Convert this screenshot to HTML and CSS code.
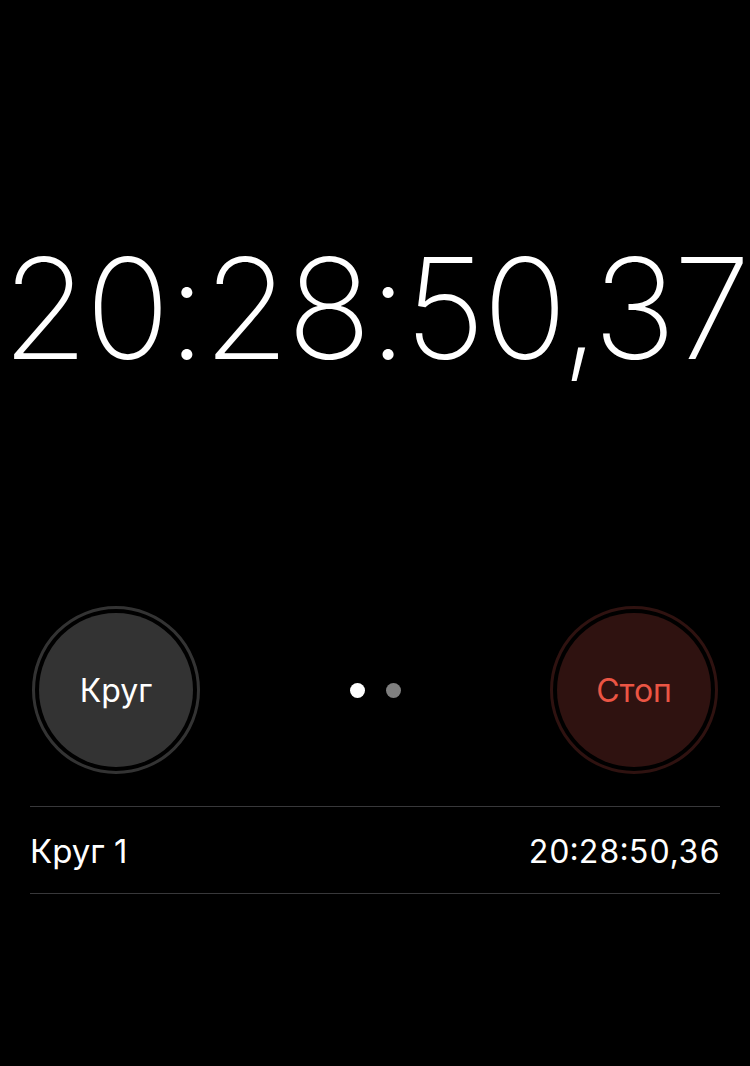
FILE: index.html
```html
<!DOCTYPE html>
<html lang="ru">
<head>
<meta charset="utf-8">
<link rel="stylesheet" href="styles.css">
</head>
<body>
<main class="stopwatch">
  <div class="clock">20:28:50,37</div>
  <div class="controls">
    <button class="btn btn-lap"><span class="btn-face">Круг</span></button>
    <div class="pager">
      <span class="dot dot-active"></span>
      <span class="dot"></span>
    </div>
    <button class="btn btn-stop"><span class="btn-face">Стоп</span></button>
  </div>
  <ul class="laps">
    <li class="lap"><span class="lap-name">Круг 1</span><span class="lap-time">20:28:50,36</span></li>
  </ul>
</main>
</body>
</html>
```
FILE: styles.css
```css
html, body {
  margin: 0;
  background: #000;
  color: #fff;
  font-family: Inter, "Noto Sans", "Liberation Sans", sans-serif;
}

.stopwatch {
  width: 750px;
  height: 1066px;
  display: flex;
  flex-direction: column;
}

.clock {
  margin-top: 228px;
  height: 160px;
  display: flex;
  align-items: center;
  justify-content: center;
  font-size: 140px;
  font-weight: 200;
  letter-spacing: -2.8px;
  white-space: nowrap;
}

.controls {
  margin-top: 218px;
  padding: 0 32px;
  height: 168px;
  display: flex;
  align-items: center;
  justify-content: space-between;
}

.btn {
  width: 168px;
  height: 168px;
  border-radius: 50%;
  padding: 0;
  border: 3px solid;
  background: #000;
  display: flex;
  align-items: center;
  justify-content: center;
  font-family: inherit;
  box-sizing: border-box;
}

.btn-face {
  width: 154px;
  height: 154px;
  border-radius: 50%;
  display: flex;
  align-items: center;
  justify-content: center;
  font-size: 32px;
}

.btn-lap { border-color: #333; }
.btn-lap .btn-face { background: #333; color: #fff; }

.btn-stop { border-color: #2f1210; }
.btn-stop .btn-face { background: #2f1210; color: #eb5544; }

.pager {
  display: flex;
  gap: 21px;
}

.dot {
  width: 15px;
  height: 15px;
  border-radius: 50%;
  background: #7f7f7f;
}

.dot-active { background: #fff; }

.laps {
  list-style: none;
  margin: 32px 30px 0;
  padding: 0;
  border-top: 1px solid #38383a;
}

.lap {
  height: 87px;
  border-bottom: 1px solid #38383a;
  display: flex;
  align-items: center;
  justify-content: space-between;
  font-size: 32px;
  padding-top: 2px;
  box-sizing: border-box;
}

.lap-name { font-size: 33px; }

.lap-time { font-variant-numeric: tabular-nums; }
```
